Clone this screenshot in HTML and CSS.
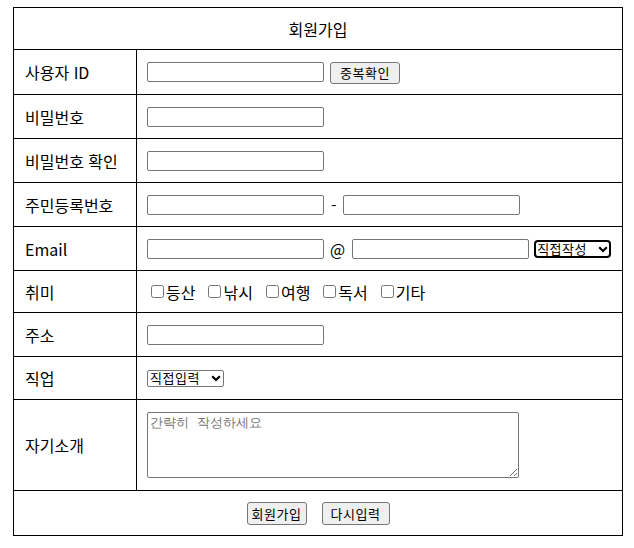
FILE: index.html
```html
<!DOCTYPE html>
<html lang="ko">
<head>
<meta charset="utf-8">
<title>회원가입</title>
<link rel="stylesheet" href="styles.css">
</head>
<body>
<form class="join">
<table class="join-table">
  <colgroup><col class="col-label"><col class="col-field"></colgroup>
  <tr class="row-title"><td colspan="2" class="title">회원가입</td></tr>
  <tr class="row-45">
    <td class="label">사용자 ID</td>
    <td class="field"><div class="line"><input type="text" class="txt"><button type="button" class="btn btn-check">중복확인</button></div></td>
  </tr>
  <tr class="row-44">
    <td class="label">비밀번호</td>
    <td class="field"><div class="line"><input type="password" class="txt"></div></td>
  </tr>
  <tr class="row-44">
    <td class="label">비밀번호 확인</td>
    <td class="field"><div class="line"><input type="password" class="txt"></div></td>
  </tr>
  <tr class="row-44">
    <td class="label">주민등록번호</td>
    <td class="field"><div class="line"><input type="text" class="txt"><span class="sep sep-dash">-</span><input type="text" class="txt"></div></td>
  </tr>
  <tr class="row-44">
    <td class="label">Email</td>
    <td class="field"><div class="line"><input type="text" class="txt"><span class="sep sep-at">@</span><input type="text" class="txt"><span class="sel-wrap sel-wrap-mail"><select class="sel sel-mail"><option>직접작성</option></select><svg class="chev" viewBox="0 0 10 7" width="10" height="7"><path d="M1.2 1.2 L5 5 L8.8 1.2" fill="none" stroke="#000" stroke-width="2.2"/></svg></span></div></td>
  </tr>
  <tr class="row-42">
    <td class="label">취미</td>
    <td class="field"><div class="line hobbies">
      <label class="hobby"><input type="checkbox">등산</label>
      <label class="hobby"><input type="checkbox">낚시</label>
      <label class="hobby"><input type="checkbox">여행</label>
      <label class="hobby"><input type="checkbox">독서</label>
      <label class="hobby"><input type="checkbox">기타</label>
    </div></td>
  </tr>
  <tr class="row-44">
    <td class="label">주소</td>
    <td class="field"><div class="line"><input type="text" class="txt"></div></td>
  </tr>
  <tr class="row-43">
    <td class="label">직업</td>
    <td class="field"><div class="line"><span class="sel-wrap"><select class="sel sel-job"><option>직접입력</option></select><svg class="chev" viewBox="0 0 10 7" width="10" height="7"><path d="M1.2 1.2 L5 5 L8.8 1.2" fill="none" stroke="#000" stroke-width="2.2"/></svg></span></div></td>
  </tr>
  <tr class="row-91">
    <td class="label">자기소개</td>
    <td class="field"><div class="line"><textarea class="intro" placeholder="간략히 작성하세요"></textarea></div></td>
  </tr>
  <tr class="row-45">
    <td colspan="2" class="actions"><div class="buttons"><button type="submit" class="btn btn-submit">회원가입</button><button type="reset" class="btn btn-reset">다시입력</button></div></td>
  </tr>
</table>
</form>
</body>
</html>
```
FILE: styles.css
```css
html, body {
  background: #fff;
}
body {
  margin: 7px 0 0 13px;
  font-family: "Noto Sans CJK KR", "Noto Sans", sans-serif;
  font-size: 16px;
  color: #000;
}
.join-table {
  border-collapse: collapse;
  table-layout: fixed;
  width: 610px;
}
.col-label { width: 123px; }
.join-table td {
  border: 1px solid #000;
  padding: 0;
  vertical-align: middle;
  line-height: 20px;
}
.row-title { height: 42px; }
.row-45 { height: 45px; }
.row-44 { height: 44px; }
.row-43 { height: 43px; }
.row-42 { height: 42px; }
.row-91 { height: 91px; }
.title {
  text-align: center;
}
.label {
  padding-left: 11px !important;
}
.field {
  padding-left: 10px !important;
}
.line {
  display: flex;
  align-items: center;
}
.txt {
  box-sizing: border-box;
  width: 177px;
  height: 20px;
  margin: 0;
  padding: 1px 2px;
  border: 1px solid #767676;
  border-radius: 2px;
  font: 13px "Noto Sans CJK KR", sans-serif;
}
.btn {
  box-sizing: border-box;
  height: 22px;
  margin: 0;
  padding: 0;
  border: 1px solid #767676;
  border-radius: 3px;
  background: #efefef;
  color: #000;
  font: 13px/20px "Noto Sans CJK KR", sans-serif;
  letter-spacing: 0.5px;
}
.btn-check {
  width: 70px;
  margin-left: 6px;
  margin-top: 2px;
}
.sep {
  font-size: 16px;
}
.sep-dash { margin: 0 6px 0 7px; }
.sep-at { margin: 0 7px 0 6px; }
.sel-wrap {
  position: relative;
  display: inline-block;
  line-height: 0;
}
.sel-wrap-mail {
  margin-left: 5px;
}
.sel {
  -webkit-appearance: none;
  appearance: none;
  box-sizing: border-box;
  display: block;
  margin: 0;
  padding: 0 14px 0 2px;
  font: 13px/14px "Noto Sans CJK KR", sans-serif;
  color: #000;
  background: #fff;
  width: 77px;
  height: 18px;
}
.sel-mail {
  border: 2px solid #000;
  border-radius: 4px;
  padding-left: 1px;
  letter-spacing: 0.5px;
}
.sel-job {
  height: 17px;
  border: 1px solid #767676;
  border-radius: 2px;
  letter-spacing: 0.5px;
}
.chev {
  position: absolute;
  right: 3px;
  top: 50%;
  margin-top: -3px;
  pointer-events: none;
}
.hobbies {
  font-size: 16px;
}
.hobby {
  display: inline-flex;
  align-items: center;
  margin-right: 9px;
}
.hobby input {
  width: 13px;
  height: 13px;
  margin: 3px 2px 3px 4px;
}
.intro {
  box-sizing: border-box;
  width: 372px;
  height: 66px;
  margin: 0;
  padding: 1px 2px;
  border: 1px solid #767676;
  border-radius: 2px;
  font: 13px "DejaVu Sans Mono", monospace;
}
.intro::placeholder {
  color: #757575;
}
.actions {
  text-align: center;
}
.buttons {
  display: flex;
  justify-content: center;
  gap: 15px;
}
.btn-submit, .btn-reset {
  height: 23px;
  margin-top: 1px;
}
.btn-submit { width: 60px; }
.btn-reset { width: 68px; }
```
